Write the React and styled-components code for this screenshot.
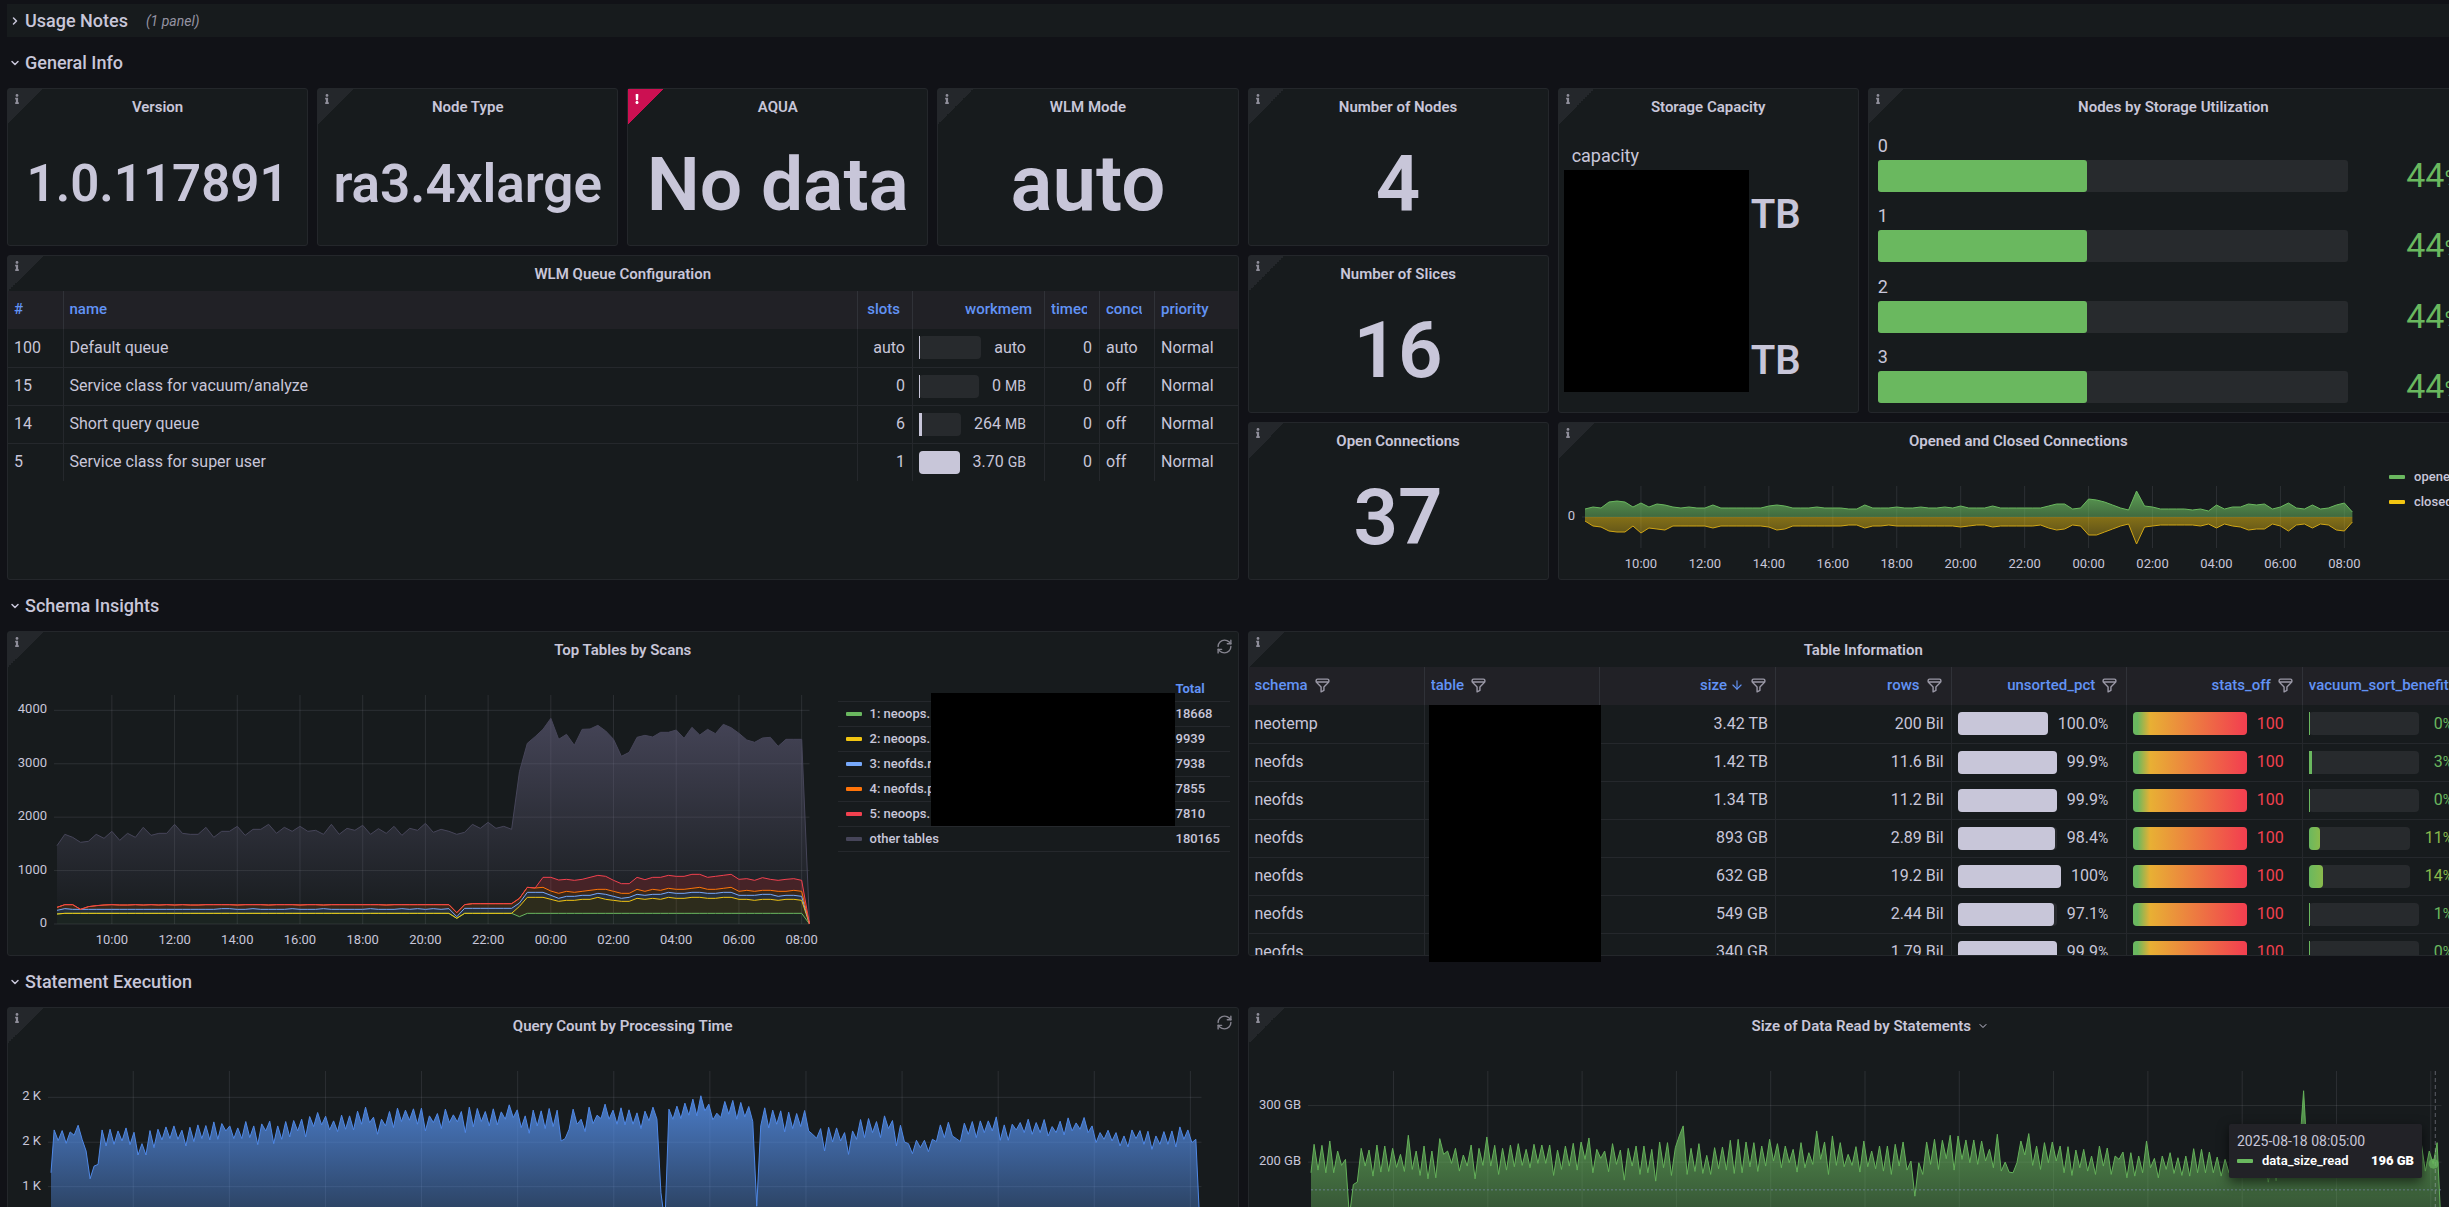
import React from 'react'
import styled, { createGlobalStyle, css } from 'styled-components'
import { ChevronDown, ChevronRight, RefreshCw, ArrowDown } from 'lucide-react'
import { FaInfo, FaExclamation } from 'react-icons/fa'

const GREEN = '#6ab85f'
const YELLOW = '#f2c511'
const BLUE = '#77a9fb'
const ORANGE = '#ff7409'
const RED = '#f2414f'
const GREY = '#464559'

/* ---------- data ---------- */

const queues = [
    { id: 100, name: 'Default queue', slots: 'auto', mem: 'auto', fill: 0, concurrency: 'auto' },
    { id: 15, name: 'Service class for vacuum/analyze', slots: 0, mem: '0', unit: 'MB', fill: 0, concurrency: 'off' },
    { id: 14, name: 'Short query queue', slots: 6, mem: '264', unit: 'MB', fill: 7, concurrency: 'off' },
    { id: 5, name: 'Service class for super user', slots: 1, mem: '3.70', unit: 'GB', fill: 100, concurrency: 'off' },
]

const tables = [
    { schema: 'neotemp', size: '3.42 TB', rows: '200 Bil', unsorted: '100.0', vacuum: 0 },
    { schema: 'neofds', size: '1.42 TB', rows: '11.6 Bil', unsorted: '99.9', vacuum: 3 },
    { schema: 'neofds', size: '1.34 TB', rows: '11.2 Bil', unsorted: '99.9', vacuum: 0 },
    { schema: 'neofds', size: '893 GB', rows: '2.89 Bil', unsorted: '98.4', vacuum: 11 },
    { schema: 'neofds', size: '632 GB', rows: '19.2 Bil', unsorted: '100', vacuum: 14 },
    { schema: 'neofds', size: '549 GB', rows: '2.44 Bil', unsorted: '97.1', vacuum: 1 },
    { schema: 'neofds', size: '340 GB', rows: '1.79 Bil', unsorted: '99.9', vacuum: 0 },
]

const scanLegend = [
    { color: GREEN, name: '1: neoops.', total: 18668 },
    { color: YELLOW, name: '2: neoops.', total: 9939 },
    { color: BLUE, name: '3: neofds.r', total: 7938 },
    { color: ORANGE, name: '4: neofds.p', total: 7855 },
    { color: RED, name: '5: neoops.', total: 7810 },
    { color: GREY, name: 'other tables', total: 180165 },
]

const hours = ['10:00', '12:00', '14:00', '16:00', '18:00', '20:00', '22:00', '00:00', '02:00', '04:00', '06:00', '08:00']

const repeat = (value, times) => Array(times).fill(value)

// stacked heights, one point per 15 minutes, 160 units = 1000 scans
const scansTotal = [
    235, 269, 260, 245, 248, 269, 257, 278, 251, 272, 260, 290, 266, 272, 272, 299, 272, 269, 269, 290, 260, 278, 278, 293,
    266, 284, 284, 299, 272, 290, 278, 293, 278, 281, 269, 299, 269, 287, 281, 296, 269, 286, 272, 293, 266, 287, 281, 302,
    275, 284, 278, 269, 275, 299, 287, 305, 287, 293, 284, 457, 542, 562, 584, 617, 554, 569, 536, 584, 585, 596, 579, 554,
    503, 515, 560, 566, 561, 575, 575, 582, 557, 590, 567, 584, 571, 599, 589, 572, 552, 545, 558, 560, 533, 554, 554, 554, 0,
]
const scansRed = [
    50, 58, 58, 44, 52, 55, 57, 58, 57, 57, 58, 57, 58, 57, 58, 57, 58, 57, 57, 58, 58, 58, 58, 57,
    58, 58, 58, 57, 58, 58, 58, 57, 58, 58, 57, 58, 58, 58, 58, 58, 58, 58, 57, 58, 58, 58, 58, 58,
    58, 58, 58, 34, 58, 61, 61, 61, 61, 61, 61, 77, 110, 108, 140, 140, 132, 134, 131, 134, 140, 146, 143, 131,
    121, 121, 140, 133, 140, 140, 146, 143, 143, 149, 149, 140, 143, 146, 149, 134, 136, 131, 139, 134, 131, 134, 136, 131, 0,
]
const scansOrange = [
    ...scansRed.slice(0, 60), 110, 108, 110, 99, 92, 98, 95, 98, 101, 104, 104, 98,
    92, 92, 104, 98, 104, 101, 107, 104, 104, 107, 110, 104, 104, 107, 110, 98, 101, 98, 101, 101, 98, 98, 101, 98, 0,
]
const scansBlue = [
    41, 46, ...repeat(44, 19), 46, 46, 44, 44, 46, ...repeat(44, 4), 46, 44, 44, 44, 46, ...repeat(44, 5), 46, 44, 44, 44, 46, 44, 46, 44, 46, 44, 46,
    22, ...repeat(47, 7), 63, 95, 95, 95, 86, 77, 83, 83, 86, 86, 92, 89, 83,
    77, 80, 89, 86, 89, 89, 95, 92, 92, 95, 95, 92, 92, 95, 95, 86, 86, 86, 89, 89, 83, 86, 86, 83, 0,
]
const scansYellow = [
    30, ...repeat(32, 50), 17, ...repeat(32, 7), 53, 80, 80, 80, 74, 68, 71, 71, 74, 74, 80, 74, 71,
    68, 68, 77, 74, 77, 74, 80, 77, 77, 80, 80, 77, 77, 80, 80, 74, 74, 71, 74, 74, 71, 74, 74, 71, 0,
]
const scansGreen = [30, ...repeat(32, 50), 17, ...repeat(32, 7), 22, ...repeat(32, 36), 0]

const opened = [
    8, 10, 9, 15, 16, 15, 10, 14, 10, 13, 12, 10, 9, 10, 9, 9, 12, 9, 9, 9, 9, 9, 9, 11, 12, 11, 9, 9, 9, 10, 9, 9,
    9, 8, 8, 12, 9, 9, 9, 10, 9, 9, 10, 9, 9, 10, 9, 11, 9, 9, 9, 11, 9, 9, 9, 9, 9, 9, 11, 13, 13, 8, 9, 18,
    17, 15, 12, 9, 7, 26, 11, 10, 8, 8, 8, 8, 7, 8, 6, 12, 8, 10, 10, 13, 12, 13, 8, 10, 14, 9, 8, 12, 8, 9, 12, 14, 5,
]
const closed = [
    4, 9, 10, 14, 15, 15, 9, 16, 11, 12, 13, 9, 9, 9, 9, 9, 11, 9, 9, 9, 9, 9, 9, 10, 13, 12, 9, 9, 9, 9, 9, 9,
    9, 8, 8, 11, 9, 9, 8, 9, 9, 9, 9, 9, 9, 9, 9, 10, 9, 8, 8, 10, 9, 9, 9, 9, 9, 8, 11, 13, 12, 8, 9, 18,
    18, 15, 12, 9, 7, 27, 10, 9, 8, 8, 8, 8, 8, 9, 7, 11, 7, 9, 10, 13, 12, 12, 7, 9, 14, 8, 7, 11, 7, 8, 13, 14, 5,
]

// peak and following trough, plot coordinates with y growing downwards
const queryCount = [
    512, 544, 514, 552, 518, 528, 498, 540, 575, 658, 620, 615, 512, 560, 510, 555, 515, 545, 506, 556, 519, 587, 553, 587,
    514, 565, 510, 542, 503, 538, 500, 540, 513, 560, 504, 547, 497, 538, 499, 542, 488, 540, 493, 515, 500, 538, 506, 538,
    487, 535, 500, 556, 494, 515, 486, 553, 500, 540, 487, 533, 484, 515, 480, 533, 472, 502, 460, 497, 471, 512, 485, 517,
    468, 510, 470, 512, 456, 495, 444, 490, 474, 525, 480, 500, 457, 505, 447, 487, 453, 483, 449, 495, 447, 515, 470, 490,
    463, 508, 450, 490, 467, 488, 457, 520, 444, 503, 448, 487, 457, 500, 449, 497, 458, 480, 437, 475, 452, 505, 470, 522,
    453, 500, 455, 508, 448, 502, 453, 545, 538, 510, 450, 495, 480, 517, 444, 493, 468, 478, 435, 480, 453, 495, 446, 497,
    452, 495, 461, 508, 456, 485, 444, 480, 700, 790, 450, 480, 441, 478, 432, 468, 420, 470, 410, 455, 435, 482, 462, 475,
    427, 465, 424, 480, 430, 473, 442, 487, 740, 500, 446, 506, 453, 495, 455, 518, 459, 508, 463, 502, 454, 515, 525, 537,
    508, 575, 504, 548, 506, 545, 520, 585, 515, 540, 481, 535, 478, 520, 487, 535, 470, 508, 484, 560, 498, 548, 553, 583,
    543, 565, 543, 577, 540, 547, 497, 535, 489, 530, 538, 547, 492, 525, 487, 535, 485, 520, 485, 515, 473, 543, 497, 543,
    495, 512, 490, 520, 480, 525, 490, 520, 481, 530, 502, 520, 486, 527, 476, 515, 491, 510, 475, 520, 500, 550, 520, 540,
    513, 545, 520, 560, 530, 563, 512, 538, 514, 555, 516, 570, 530, 555, 517, 555, 515, 563, 503, 540, 512, 550, 540, 800,
]
const dataRead = [
    555, 632, 558, 640, 545, 640, 575, 618, 600, 770, 675, 668, 567, 620, 572, 650, 557, 638, 560, 636, 567, 624, 585, 636,
    528, 630, 575, 648, 560, 658, 575, 655, 538, 585, 575, 612, 567, 635, 587, 620, 557, 658, 567, 618, 533, 620, 558, 645,
    567, 632, 557, 622, 553, 618, 570, 625, 555, 612, 557, 612, 557, 648, 572, 630, 560, 620, 552, 632, 548, 600, 536, 640,
    570, 597, 575, 637, 553, 615, 572, 662, 567, 620, 560, 645, 560, 640, 570, 665, 548, 625, 550, 648, 565, 530, 500, 645,
    567, 636, 553, 642, 588, 645, 565, 628, 563, 632, 543, 642, 540, 640, 548, 622, 550, 636, 560, 620, 540, 605, 553, 625,
    560, 610, 570, 638, 550, 625, 580, 615, 515, 600, 548, 645, 530, 618, 550, 622, 585, 618, 562, 638, 545, 622, 575, 628,
    560, 635, 560, 645, 555, 620, 548, 632, 605, 710, 610, 645, 548, 615, 540, 630, 543, 598, 528, 632, 530, 600, 542, 610,
    542, 615, 545, 605, 570, 625, 525, 635, 608, 638, 640, 610, 545, 587, 523, 618, 560, 630, 550, 610, 548, 605, 560, 640,
    562, 648, 572, 625, 570, 635, 590, 645, 560, 620, 566, 645, 590, 600, 578, 655, 580, 650, 590, 640, 545, 625, 597, 655,
    590, 630, 580, 642, 595, 648, 590, 650, 568, 640, 570, 640, 578, 640, 593, 650, 600, 640, 580, 640, 590, 640, 580, 640,
    600, 650, 590, 668, 600, 664, 580, 640, 570, 640, 590, 560, 395, 600, 580, 640, 590, 640, 580, 640, 600, 640, 570, 640,
    590, 640, 580, 640, 590, 640, 580, 640, 600, 640, 570, 640, 590, 640, 580, 640, 590, 640, 555, 635, 575, 613, 550, 800,
]

/* ---------- path helpers ---------- */

const toLine = (points) => 'M' + points.map((p) => p.join(' ')).join('L')
const toArea = (upper, lower) => toLine([...upper, ...[...lower].reverse()]) + 'Z'
const indexed = (values, map) => values.map((v, i) => [i, map(v)])

const SCANS_TOP = 687
const scanPoints = (values) => indexed(values, (v) => SCANS_TOP - v)
const zigzag = (values, start, step) => [[0, 640], ...values.map((v, i) => [start + i * step, v])]

/* ---------- page ---------- */

const GlobalStyle = createGlobalStyle`
*{
    box-sizing:border-box;
}
body{
    margin:0;
    background:#111217;
    color:#c8c6d9;
    font-family:Roboto, "Liberation Sans", sans-serif;
    font-size:16px;
    line-height:22px;
}
button{
    padding:0;
    border:0;
    background:none;
    color:inherit;
    font:inherit;
    cursor:pointer;
}
`

const Page = styled.main`
    height:100vh;
    overflow:hidden;
    padding:4px 0 0 7px;
`

/* the board is a little wider than the viewport and runs off its right side */
const Board = styled.div`
    width:calc(100% + 30px);
    display:flex;
    flex-direction:column;
    gap:9px;
`

const Grid = styled.div`
    display:grid;
    grid-template-columns:repeat(8, minmax(0, 1fr));
    grid-auto-rows:${(p) => (p.$tall ? 325 : 158)}px;
    gap:9px;
`

const SectionRow = styled.h2`
    margin:0;
    height:33px;
    display:flex;
    align-items:center;
    background:${(p) => (p.$closed ? '#171b1d' : 'transparent')};
    font-size:18px;
    font-weight:500;
    button{
        display:flex;
        align-items:center;
        gap:4px;
        padding-left:2px;
    }
    small{
        margin-left:18px;
        color:#9593a2;
        font-size:14px;
        font-style:italic;
        font-weight:400;
    }
`

const PanelBox = styled.section`
    position:relative;
    display:flex;
    flex-direction:column;
    min-width:0;
    grid-column:span ${(p) => p.$cols || 1};
    grid-row:span ${(p) => p.$rows || 1};
    border:1px solid #24272b;
    border-radius:3px;
    background:#171b1d;
`

const PanelHeader = styled.header`
    flex:none;
    height:35px;
    display:flex;
    align-items:center;
    justify-content:center;
    h3{
        margin:0;
        font-size:15px;
        font-weight:600;
    }
    h3 button{
        display:flex;
        align-items:center;
        gap:6px;
        padding-left:14px;
    }
`

const PanelBody = styled.div`
    flex:1;
    min-height:0;
    display:flex;
    overflow:${(p) => (p.$clip ? 'hidden' : 'visible')};
`

const Corner = styled.button`
    && {
        position:absolute;
        top:0;
        left:0;
        width:35px;
        height:35px;
        display:flex;
        padding:5px 0 0 4px;
        color:${(p) => (p.$error ? '#fff' : '#8f8e9a')};
        background:linear-gradient(135deg, ${(p) => (p.$error ? '#cc1052' : '#24272b')} 50%, transparent 50%);
    }
`

const Refresh = styled.button`
    && {
        position:absolute;
        top:6px;
        right:5px;
        height:16px;
        color:#85848f;
    }
`

const StatBody = styled.div`
    flex:1;
    display:flex;
    align-items:center;
    justify-content:center;
    padding-bottom:2px;
    font-size:${(p) => p.$size}px;
    line-height:88px;
    font-weight:600;
    white-space:nowrap;
`

const Redacted = styled.div`
    background:#000;
    ${(p) => p.$over && css`
        position:absolute;
    `}
`

/* ---------- storage ---------- */

const Capacity = styled.div`
    flex:1;
    display:flex;
    flex-direction:column;
    padding:20px 5px;
`

const CapacityLabel = styled.div`
    padding:0 0 2px 8px;
    font-size:18px;
    line-height:24px;
`

const CapacityValues = styled.div`
    display:flex;
    gap:2px;
    height:223px;
    ${Redacted}{
        width:185px;
    }
`

const Units = styled.div`
    display:flex;
    flex-direction:column;
    justify-content:space-between;
    padding:21px 0 7px;
    font-size:40px;
    line-height:48px;
    font-weight:600;
`

const GaugeList = styled.div`
    flex:1;
    display:flex;
    flex-direction:column;
    justify-content:space-between;
    padding:11px 9px 9px;
`

const GaugeLabel = styled.div`
    margin-bottom:3px;
    font-size:18px;
    line-height:22px;
`

const GaugeRow = styled.div`
    display:flex;
    height:32px;
`

const GaugeTrack = styled.div`
    flex:1;
    border-radius:3px;
    background:#272a2d;
`

const GaugeFill = styled.div`
    height:100%;
    border-radius:3px;
    background:${(p) => p.$color || GREEN};
`

const GaugeValue = styled.div`
    width:121px;
    padding-right:7px;
    text-align:right;
    color:${GREEN};
    font-size:34px;
    line-height:30px;
    small{
        font-size:24px;
    }
`

/* ---------- tables ---------- */

const Table = styled.table`
    width:100%;
    align-self:flex-start;
    table-layout:fixed;
    border-collapse:collapse;
    th, td{
        height:38px;
        padding:0 7px;
        text-align:left;
        white-space:nowrap;
        overflow:hidden;
        border-right:1px solid #25282c;
    }
    th{
        padding:0 ${(p) => (p.$filters ? 8 : 12)}px 2px 6px;
        background:#212126;
        color:#6293f5;
        font-size:15px;
        font-weight:500;
        border-color:#303238;
    }
    td{
        padding-left:6px;
        border-bottom:1px solid #25282c;
    }
    tr > :last-child{
        border-right:0;
    }
    tbody tr:last-child td{
        border-bottom:0;
    }
    th > div{
        overflow:hidden;
    }
    .num{
        text-align:right;
    }
    .num > div{
        justify-content:flex-end;
    }
`

const HeadCell = styled.div`
    display:flex;
    align-items:center;
    gap:6px;
    button{
        display:flex;
        align-items:center;
        gap:3px;
    }
    button + button{
        color:#9a98a6;
    }
`

const BarCell = styled.div`
    display:flex;
    align-items:center;
    gap:${(p) => p.$gap}px;
    padding-right:${(p) => p.$end}px;
    color:${(p) => p.$color || 'inherit'};
    small{
        font-size:14px;
    }
`

const BarTrack = styled.div`
    flex:1;
    height:23px;
    border-radius:4px;
    background:#272a2d;
`

const BarFill = styled.div`
    min-width:1px;
    height:100%;
    border-radius:${(p) => (p.$thin ? 0 : 4)}px;
    background:${(p) => p.$color};
`

const TableShade = styled(Redacted)`
    top:73px;
    bottom:-7px;
    left:calc(100% / 7 + 5px);
    width:14%;
`

/* ---------- charts ---------- */

const PlotBox = styled.div`
    flex:1;
    min-width:0;
    margin:${(p) => p.$margin};
    svg{
        display:block;
        overflow:visible;
    }
    text{
        fill:#c8c6d9;
        font-size:13px;
    }
    line{
        stroke:#c8c6d9;
        stroke-opacity:.12;
    }
    path{
        vector-effect:non-scaling-stroke;
    }
`

const Legend = styled.table`
    align-self:flex-start;
    flex:none;
    width:392px;
    margin:11px 8px 0 0;
    border-collapse:collapse;
    font-size:13px;
    font-weight:500;
    th, td{
        height:25px;
        padding:0;
        text-align:left;
        border-bottom:1px solid #25282c;
    }
    thead th{
        height:23px;
        color:#6293f5;
    }
    .swatch{
        width:32px;
        padding-left:8px;
    }
    .total{
        width:54px;
    }
`

const LegendShade = styled(Redacted)`
    top:61px;
    right:63px;
    width:244px;
    height:133px;
`

const Swatch = styled.span`
    display:block;
    width:16px;
    height:4px;
    border-radius:1px;
    background:${(p) => p.$color};
`

const SideLegend = styled.ul`
    flex:none;
    width:97px;
    margin:0;
    padding:6px 0 0 8px;
    list-style:none;
    font-size:13px;
    font-weight:500;
    li{
        display:flex;
        align-items:center;
        gap:9px;
        height:25px;
    }
`

const Tooltip = styled.div`
    position:absolute;
    top:116px;
    right:56px;
    width:193px;
    padding:6px 8px;
    border-radius:2px;
    background:#222227;
    box-shadow:0 4px 12px rgba(0,0,0,.6);
    font-size:14px;
    line-height:22px;
    div{
        display:flex;
        align-items:center;
        gap:9px;
        margin-top:-2px;
        color:#fff;
        font-size:13px;
        font-weight:600;
    }
    b{
        margin-left:auto;
    }
`

function FilterIcon() {
    return (
        <svg width="17" height="17" viewBox="0 0 24 24" fill="currentColor" aria-hidden="true">
            <path d="M19,2H5A3,3,0,0,0,2,5V6.17a3,3,0,0,0,.25,1.2l0,.06a2.81,2.81,0,0,0,.59.86L9,14.41V21a1,1,0,0,0,.47.85A1,1,0,0,0,10,22a1,1,0,0,0,.45-.11l4-2A1,1,0,0,0,15,19V14.41l6.12-6.12a2.81,2.81,0,0,0,.59-.86l0-.06A3,3,0,0,0,22,6.17V5A3,3,0,0,0,19,2ZM13.29,13.29A1,1,0,0,0,13,14v4.38l-2,1V14a1,1,0,0,0-.29-.71L5.41,8H18.59ZM20,6H4V5A1,1,0,0,1,5,4H19a1,1,0,0,1,1,1Z" />
        </svg>
    )
}

function Section({ title, closed, note }) {
    const Icon = closed ? ChevronRight : ChevronDown
    return (
        <SectionRow $closed={closed}>
            <button type="button" aria-expanded={!closed}>
                <Icon size={12} strokeWidth={3} />
                {title}
            </button>
            {note && <small>{note}</small>}
        </SectionRow>
    )
}

function Panel({ title, cols, rows, error, refresh, menu, clip, children, over }) {
    return (
        <PanelBox $cols={cols} $rows={rows}>
            <PanelHeader>
                <h3>{menu ? <button type="button">{title}<ChevronDown size={12} /></button> : title}</h3>
            </PanelHeader>
            <Corner type="button" $error={error} aria-label={error ? 'Panel error' : 'Panel description'}>
                {error ? <FaExclamation size={10} /> : <FaInfo size={10} />}
            </Corner>
            {refresh && <Refresh type="button" aria-label="Refresh"><RefreshCw size={17} strokeWidth={2} /></Refresh>}
            <PanelBody $clip={clip}>{children}</PanelBody>
            {over}
        </PanelBox>
    )
}

function Stat({ title, value, size, error }) {
    return (
        <Panel title={title} error={error}>
            <StatBody $size={size}>{value}</StatBody>
        </Panel>
    )
}

function Chart({ margin, viewBox, xTicks, yTicks, children, over }) {
    return (
        <PlotBox $margin={margin}>
            <svg width="100%" height="100%">
                {yTicks.map(({ at, label }, i) => (
                    <g key={i}>
                        <line x1="-3" x2="100%" y1={`${at}%`} y2={`${at}%`} />
                        <text x="-10" y={`${at}%`} dy="3" textAnchor="end">{label}</text>
                    </g>
                ))}
                {xTicks.map(({ at, label }, i) => (
                    <g key={i}>
                        <line x1={`${at}%`} x2={`${at}%`} y1="0" y2="100%" />
                        {label && <text x={`${at}%`} y="100%" dy="20" textAnchor="middle">{label}</text>}
                    </g>
                ))}
                <svg width="100%" height="100%" viewBox={viewBox} preserveAspectRatio="none">
                    {children}
                </svg>
                {over}
            </svg>
        </PlotBox>
    )
}

function Fade({ id, color, y1, y2, from, to }) {
    return (
        <linearGradient id={id} gradientUnits="userSpaceOnUse" x1="0" x2="0" y1={y1} y2={y2}>
            <stop offset="0" stopColor={color} stopOpacity={from} />
            <stop offset="1" stopColor={color} stopOpacity={to} />
        </linearGradient>
    )
}

const hourTicks = hours.map((label, i) => ({ label, at: ((7 + i * 8) / 96) * 100 }))

function Connections() {
    const up = indexed(opened, (v) => -v)
    const down = indexed(closed, (v) => v)
    const zero = indexed(opened, () => 0)
    return (
        <Panel title="Opened and Closed Connections" cols={3}>
            <Chart margin="28px 29px 31px 26px" viewBox="0 -31 96 62" xTicks={hourTicks} yTicks={[{ at: 50, label: '0' }]}>
                <Fade id="opened" color={GREEN} y1="-26" y2="0" from=".85" to=".5" />
                <Fade id="closed" color={YELLOW} y1="0" y2="27" from=".5" to=".25" />
                <path d={toArea(up, zero)} fill="url(#opened)" />
                <path d={toArea(down, zero)} fill="url(#closed)" />
                <path d={toLine(up)} fill="none" stroke={GREEN} />
                <path d={toLine(down)} fill="none" stroke="#d2a614" />
            </Chart>
            <SideLegend>
                <li><Swatch $color={GREEN} />opened</li>
                <li><Swatch $color={YELLOW} />closed</li>
            </SideLegend>
        </Panel>
    )
}

function TopTables() {
    const floor = scanPoints(repeat(0, 97))
    const bands = [
        [scansGreen, null, GREEN, 0.06],
        [scansYellow, scansGreen, YELLOW, 0.1],
        [scansBlue, scansYellow, BLUE, 0.15],
        [scansOrange, scansBlue, ORANGE, 0.15],
        [scansRed, scansOrange, RED, 0.22],
    ]
    const yTicks = [4, 3, 2, 1, 0].map((k) => ({ at: 100 - (k * 160.25 * 100) / SCANS_TOP, label: k ? k * 1000 : 0 }))
    return (
        <Panel title="Top Tables by Scans" cols={4} refresh over={<LegendShade $over />}>
            <Chart margin="28px 28px 31px 49px" viewBox={`0 0 96 ${SCANS_TOP}`} xTicks={hourTicks} yTicks={yTicks}>
                <Fade id="other" color="#6a6686" y1="70" y2="640" from=".55" to=".03" />
                <path d={toArea(scanPoints(scansTotal), scanPoints(scansRed))} fill="url(#other)" />
                {bands.map(([upper, lower, color, opacity]) => (
                    <path
                        key={color}
                        d={toArea(scanPoints(upper), lower ? scanPoints(lower) : floor)}
                        fill={color}
                        fillOpacity={opacity}
                    />
                ))}
                <path d={toLine(scanPoints(scansTotal))} fill="none" stroke={GREY} />
                {bands.map(([upper, , color]) => (
                    <path key={color} d={toLine(scanPoints(upper))} fill="none" stroke={color} />
                ))}
            </Chart>
            <Legend>
                <thead>
                    <tr>
                        <th className="swatch" />
                        <th />
                        <th className="total">Total</th>
                    </tr>
                </thead>
                <tbody>
                    {scanLegend.map(({ color, name, total }) => (
                        <tr key={name}>
                            <td className="swatch"><Swatch $color={color} /></td>
                            <td>{name}</td>
                            <td>{total}</td>
                        </tr>
                    ))}
                </tbody>
            </Legend>
        </Panel>
    )
}

function QueueTable() {
    return (
        <Panel title="WLM Queue Configuration" cols={4} rows={2}>
            <Table>
                <colgroup>
                    <col width="55" />
                    <col />
                    <col width="55" />
                    <col width="132" />
                    <col width="55" />
                    <col width="55" />
                    <col width="83" />
                </colgroup>
                <thead>
                    <tr>
                        <th>#</th>
                        <th>name</th>
                        <th className="num">slots</th>
                        <th className="num">workmem</th>
                        <th><div>timeout</div></th>
                        <th><div>concurrency</div></th>
                        <th>priority</th>
                    </tr>
                </thead>
                <tbody>
                    {queues.map((q) => (
                        <tr key={q.id}>
                            <td>{q.id}</td>
                            <td>{q.name}</td>
                            <td className="num">{q.slots}</td>
                            <td>
                                <BarCell $gap={13} $end={11}>
                                    <BarTrack><BarFill $color="#c8c6d9" $thin={q.fill < 10} style={{ width: `${q.fill}%` }} /></BarTrack>
                                    <span>{q.mem} {q.unit && <small>{q.unit}</small>}</span>
                                </BarCell>
                            </td>
                            <td className="num">0</td>
                            <td>{q.concurrency}</td>
                            <td>Normal</td>
                        </tr>
                    ))}
                </tbody>
            </Table>
        </Panel>
    )
}

function FilterHead({ name, num, sorted }) {
    return (
        <th className={num ? 'num' : undefined}>
            <HeadCell>
                <button type="button">{name}{sorted && <ArrowDown size={14} />}</button>
                <button type="button" aria-label={`Filter ${name}`}><FilterIcon /></button>
            </HeadCell>
        </th>
    )
}

const vacuumColor = (value) => (value > 10 ? '#8aba4c' : GREEN)

function TableInformation() {
    return (
        <Panel title="Table Information" cols={4} clip over={<TableShade $over />}>
            <Table $filters>
                <thead>
                    <tr>
                        <FilterHead name="schema" />
                        <FilterHead name="table" />
                        <FilterHead name="size" num sorted />
                        <FilterHead name="rows" num />
                        <FilterHead name="unsorted_pct" num />
                        <FilterHead name="stats_off" num />
                        <FilterHead name="vacuum_sort_benefit" />
                    </tr>
                </thead>
                <tbody>
                    {tables.map((t, i) => (
                        <tr key={i}>
                            <td>{t.schema}</td>
                            <td />
                            <td className="num">{t.size}</td>
                            <td className="num">{t.rows}</td>
                            <td>
                                <BarCell $gap={10} $end={11}>
                                    <BarTrack><BarFill $color="#c8c6d9" style={{ width: `${t.unsorted}%` }} /></BarTrack>
                                    <span>{t.unsorted}<small>%</small></span>
                                </BarCell>
                            </td>
                            <td>
                                <BarCell $gap={10} $end={11} $color={RED}>
                                    <BarTrack>
                                        <BarFill
                                            $color={`linear-gradient(90deg, ${GREEN} 4%, #e8b034 15%, ${RED} 97%)`}
                                            style={{ width: '100%' }}
                                        />
                                    </BarTrack>
                                    <span>100</span>
                                </BarCell>
                            </td>
                            <td>
                                <BarCell $gap={15} $end={18} $color={vacuumColor(t.vacuum)}>
                                    <BarTrack>
                                        <BarFill
                                            $thin={t.vacuum < 10}
                                            $color={`linear-gradient(90deg, ${GREEN}, ${vacuumColor(t.vacuum)})`}
                                            style={{ width: `${t.vacuum < 2 ? 0 : t.vacuum}%` }}
                                        />
                                    </BarTrack>
                                    <span>{t.vacuum}<small>%</small></span>
                                </BarCell>
                            </td>
                        </tr>
                    ))}
                </tbody>
            </Table>
        </Panel>
    )
}

const steps = (start, pitch) => hours.map((_, i) => ({ at: start + i * pitch }))

function QueryCount() {
    const points = zigzag(queryCount, 4, 5.045)
    return (
        <Panel title="Query Count by Processing Time" cols={4} refresh>
            <Chart
                margin="28px 36px 31px 43px"
                viewBox="0 336 1454 684"
                xTicks={steps(7.15, 8.353)}
                yTicks={[{ at: 11.5, label: '2 K' }, { at: 31.1, label: '2 K' }, { at: 50.5, label: '1 K' }]}
            >
                <Fade id="queries" color="#5794f2" y1="410" y2="980" from=".8" to=".02" />
                <path d={toArea(points, [[0, 1020], [1454, 1020]])} fill="url(#queries)" />
                <path d={toLine(points)} fill="none" stroke="#4f88e6" />
            </Chart>
        </Panel>
    )
}

function DataRead() {
    const points = zigzag(dataRead, 4, 5.092)
    const tooltip = (
        <Tooltip>
            2025-08-18 08:05:00
            <div><Swatch $color={GREEN} />data_size_read<b>196 GB</b></div>
        </Tooltip>
    )
    return (
        <Panel title="Size of Data Read by Statements" cols={4} menu over={tooltip}>
            <Chart
                margin="28px 37px 31px 62px"
                viewBox="0 336 1466 684"
                xTicks={steps(7.3, 8.341)}
                yTicks={[{ at: 15.1, label: '300 GB' }, { at: 39.8, label: '200 GB' }]}
                over={
                    <g>
                        <line x1="0" x2="100%" y1="51.9%" y2="51.9%" style={{ stroke: '#7d8fb0', strokeOpacity: 0.7, strokeDasharray: '2 2' }} />
                        <line x1="99.45%" x2="99.45%" y1="0" y2="100%" style={{ strokeOpacity: 0.4, strokeDasharray: '4 3' }} />
                        <circle cx="99.3%" cy="40.5%" r="5" fill={GREEN} fillOpacity=".7" />
                    </g>
                }
            >
                <Fade id="read" color={GREEN} y1="395" y2="1000" from=".85" to=".05" />
                <path d={toArea(points, [[0, 1020], [1466, 1020]])} fill="url(#read)" />
                <path d={toLine(points)} fill="none" stroke="#64b159" />
            </Chart>
        </Panel>
    )
}

export default function App() {
    return (
        <Page>
            <GlobalStyle />
            <Board>
                <Section title="Usage Notes" note="(1 panel)" closed />
                <Section title="General Info" />
                <Grid>
                    <Stat title="Version" value="1.0.117891" size={51} />
                    <Stat title="Node Type" value="ra3.4xlarge" size={53} />
                    <Stat title="AQUA" value="No data" size={75} error />
                    <Stat title="WLM Mode" value="auto" size={78} />
                    <Stat title="Number of Nodes" value="4" size={78} />
                    <Panel title="Storage Capacity" rows={2}>
                        <Capacity>
                            <CapacityLabel>capacity</CapacityLabel>
                            <CapacityValues>
                                <Redacted />
                                <Units>
                                    <span>TB</span>
                                    <span>TB</span>
                                </Units>
                            </CapacityValues>
                        </Capacity>
                    </Panel>
                    <Panel title="Nodes by Storage Utilization" cols={2} rows={2}>
                        <GaugeList>
                            {[0, 1, 2, 3].map((node) => (
                                <div key={node}>
                                    <GaugeLabel>{node}</GaugeLabel>
                                    <GaugeRow>
                                        <GaugeTrack><GaugeFill style={{ width: '44.5%' }} /></GaugeTrack>
                                        <GaugeValue>44<small>%</small></GaugeValue>
                                    </GaugeRow>
                                </div>
                            ))}
                        </GaugeList>
                    </Panel>
                    <QueueTable />
                    <Stat title="Number of Slices" value="16" size={78} />
                    <Stat title="Open Connections" value="37" size={78} />
                    <Connections />
                </Grid>
                <Section title="Schema Insights" />
                <Grid $tall>
                    <TopTables />
                    <TableInformation />
                </Grid>
                <Section title="Statement Execution" />
                <Grid $tall>
                    <QueryCount />
                    <DataRead />
                </Grid>
            </Board>
        </Page>
    )
}
